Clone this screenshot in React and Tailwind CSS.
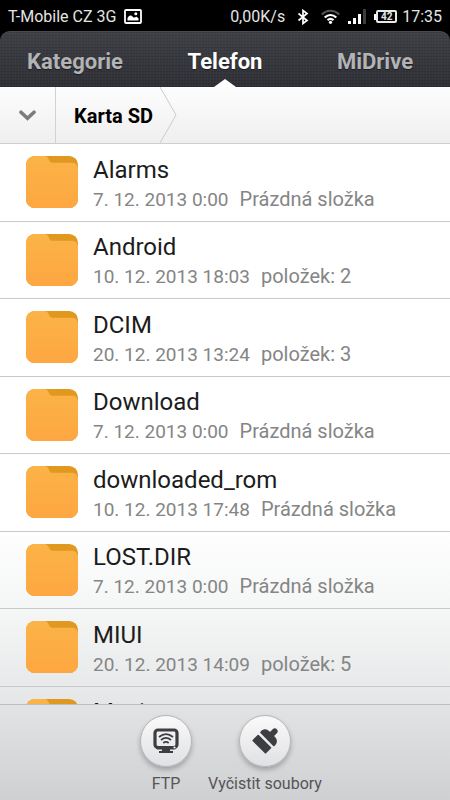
const FOLDERS = [
    { name: 'Alarms', date: '7. 12. 2013 0:00', info: 'Prázdná složka' },
    { name: 'Android', date: '10. 12. 2013 18:03', info: 'položek: 2' },
    { name: 'DCIM', date: '20. 12. 2013 13:24', info: 'položek: 3' },
    { name: 'Download', date: '7. 12. 2013 0:00', info: 'Prázdná složka' },
    { name: 'downloaded_rom', date: '10. 12. 2013 17:48', info: 'Prázdná složka' },
    { name: 'LOST.DIR', date: '7. 12. 2013 0:00', info: 'Prázdná složka' },
    { name: 'MIUI', date: '20. 12. 2013 14:09', info: 'položek: 5' },
    { name: 'Movies', date: '7. 12. 2013 0:00', info: 'Prázdná složka' },
]

const TABS = ['Kategorie', 'Telefon', 'MiDrive']

function StatusBar() {
    return (
        <div className="flex h-[31px] shrink-0 items-center justify-between bg-black px-2 pt-0.5 text-[16px] text-[#e4e4e4]">
            <div className="flex items-center gap-2">
                <span>T-Mobile CZ 3G</span>
                <svg className="h-[15px] w-[18px]" viewBox="0 0 18 15">
                    <rect x="1" y="1" width="16" height="13" rx="1" fill="none" stroke="#fff" strokeWidth="1.8" />
                    <path d="M3.5 11.5V9c1.2-2 2.4-2.8 3.6-2.4 1.3.4 1.6 1.9 2.9 2 .9 0 1.5-1 2.5-.8l2 1.5v2.2z" fill="#fff" />
                    <circle cx="11.8" cy="4.8" r="1.5" fill="#fff" />
                </svg>
            </div>
            <div className="flex items-center">
                <span>0,00K/s</span>
                <svg className="ml-3 h-4 w-3" viewBox="0 0 12 16" fill="none" stroke="#fff" strokeWidth="1.7">
                    <path d="M1.5 4.5l8.5 7L6 14.5v-13L10 4.5l-8.5 7" />
                </svg>
                <svg className="ml-3 h-[15px] w-[19px]" viewBox="0 0 19 15" fill="none" strokeWidth="2.2">
                    <path d="M.8 5.500c5-5 12.400-5 17.400 0" stroke="#555" />
                    <path d="M3.7 8.500c3.500-3.300 8.100-3.300 11.600 0" stroke="#fff" />
                    <path d="M6.5 11.200c2-1.700 4-1.700 6 0" stroke="#fff" />
                    <circle cx="9.5" cy="13.3" r="1.6" fill="#fff" />
                </svg>
                <svg className="ml-2 h-[15px] w-[18px]" viewBox="0 0 18 15" fill="#fff">
                    <rect x="0" y="12" width="3" height="3" />
                    <rect x="5" y="9" width="3" height="6" />
                    <rect x="10" y="5" width="3" height="10" />
                    <rect x="15" y="0" width="3" height="15" fill="#3c3c3c" />
                </svg>
                <div className="ml-2 flex items-center">
                    <span className="h-[6px] w-[2px] bg-white" />
                    <span className="flex h-[13px] w-[21px] items-center justify-center rounded-[2px] border-2 border-[#e8e8e8] text-[10px] font-bold leading-none">42</span>
                </div>
                <span className="ml-[5px]">17:35</span>
            </div>
        </div>
    )
}

function Tabs() {
    return (
        <div className="shrink-0 bg-black">
            <nav className="grid h-14 grid-cols-3 rounded-t-[10px] border-t border-[#4a4b50] bg-[#33343a] bg-[repeating-linear-gradient(90deg,rgba(255,255,255,0.02)_0_1px,transparent_1px_3px),repeating-linear-gradient(0deg,rgba(0,0,0,0.1)_0_1px,transparent_1px_3px),linear-gradient(#404147,#303137)]">
                {TABS.map((tab) => {
                    const active = tab === 'Telefon'
                    return (
                        <button
                            key={tab}
                            type="button"
                            className={`relative pt-1 text-[22px] font-bold [text-shadow:0_1px_1px_rgba(0,0,0,0.5)] ${active ? 'text-white' : 'text-[#b3b3b6]'}`}
                        >
                            {tab}
                            {active && (
                                <svg className="absolute bottom-0 left-1/2 h-2 w-6 -translate-x-1/2" viewBox="0 0 24 8">
                                    <path d="M1 8L12 0l11 8z" fill="#fff" />
                                </svg>
                            )}
                        </button>
                    )
                })}
            </nav>
        </div>
    )
}

function Breadcrumb() {
    return (
        <div className="flex h-[57px] shrink-0 items-stretch border-b border-[#cfcfcf] bg-gradient-to-b from-[#fdfdfd] to-[#efefef]">
            <button type="button" aria-label="Rozbalit" className="flex w-14 items-center justify-center border-r border-[#d2d2d2]">
                <svg className="h-[11px] w-[17px]" viewBox="0 0 17 11" fill="none" stroke="#7c7c7c" strokeWidth="3.6">
                    <path d="M2 2.2l6.500 6 6.500-6" strokeLinecap="round" />
                </svg>
            </button>
            <a href="#sd" className="flex items-center pl-[18px] pr-[7px] pt-0.5 text-[20px] font-bold text-black">Karta SD</a>
            <svg className="h-14 w-[18px]" viewBox="0 0 18 56" fill="none" stroke="#cbcbcb">
                <path d="M0 0l16 28L0 56" />
            </svg>
        </div>
    )
}

function FolderIcon() {
    return (
        <svg className="h-[52px] w-[52px] shrink-0" viewBox="0 0 53 53">
            <defs>
                <linearGradient id="folder" x1="0" y1="0" x2="0" y2="1">
                    <stop offset="0" stopColor="#fbb347" />
                    <stop offset="1" stopColor="#fea742" />
                </linearGradient>
            </defs>
            <rect width="53" height="53" rx="9" fill="#e0981e" />
            <path d="M9 0h10c2 0 3 1 4 3l1 2c1 1.500 2 2 4 2h18c4 0 7 2 7 6v31a9 9 0 0 1-9 9H9a9 9 0 0 1-9-9V9a9 9 0 0 1 9-9z" fill="url(#folder)" />
        </svg>
    )
}

function FolderRow({ name, date, info }) {
    return (
        <li className="h-[77px] border-b border-[#c8c9ca] odd:h-[78px]">
            <button type="button" className="flex h-full w-full items-center gap-[15px] pb-px pl-[26px] text-left">
                <FolderIcon />
                <span className="flex flex-col pt-1">
                    <span className="text-[24px] leading-[30px] text-[#1c1c1c]">{name}</span>
                    <span className="flex items-baseline gap-[11px] text-[19px] leading-[28px] text-[#858585]">
                        <span>{date}</span>
                        <span className="text-[20px]">{info}</span>
                    </span>
                </span>
            </button>
        </li>
    )
}

function ToolButton({ label, children }) {
    return (
        <button type="button" className="flex flex-col items-center gap-[5px] text-[16px] leading-[24px] text-[#545557]">
            <span className="flex h-[52px] w-[52px] items-center justify-center rounded-full border border-[#b4b5b8] bg-gradient-to-b from-[#fafafa] to-[#e0e1e4] shadow-[0_3px_5px_rgba(0,0,0,0.25)]">
                {children}
            </span>
            {label}
        </button>
    )
}

export default function App() {
    return (
        <div className="flex h-screen flex-col overflow-hidden bg-white font-[Roboto,sans-serif]">
            <StatusBar />
            <Tabs />
            <Breadcrumb />
            <ul className="min-h-0 flex-1 overflow-y-auto bg-[linear-gradient(#fff_68%,#f4f5f5_84%,#e5e6e7)] [scrollbar-width:none]">
                {FOLDERS.map((folder) => (
                    <FolderRow key={folder.name} {...folder} />
                ))}
            </ul>
            <footer className="flex h-24 shrink-0 items-start justify-center gap-4 border-t border-[#bcbdbf] bg-gradient-to-b from-[#e2e3e4] to-[#cfd0d2] pl-3 pt-[10px]">
                <ToolButton label="FTP">
                    <svg className="h-[26px] w-[26px]" viewBox="0 0 26 26" fill="none" stroke="#3d3e42">
                        <rect x="2" y="2" width="22" height="17.500" rx="3" strokeWidth="3.2" />
                        <path d="M2 18h22l-2 3.500h-5V23h3v2H6v-2h3v-1.500H4z" fill="#3d3e42" stroke="none" />
                        <path d="M6 9c4.500-3.800 9.500-3.800 14 0M8 12c3.200-2.800 6.800-2.800 10 0M10.300 15c1.800-1.500 3.600-1.500 5.400 0" strokeWidth="1.7" />
                        <circle cx="21.5" cy="19.5" r="1.1" fill="#f0f0f0" stroke="none" />
                    </svg>
                </ToolButton>
                <ToolButton label="Vyčistit soubory">
                    <svg className="h-[26px] w-[26px]" viewBox="0 0 26 26" fill="#3d3e42" stroke="#3d3e42" strokeWidth="1.6" strokeLinejoin="round">
                        <path d="M6.200 7.500L1.200 12.500l12.300 12.300L18.500 19.800z" />
                        <path d="M9 4.500c1.500-2.700 5-3.500 7.500-1l1.500 1.500 3.300-3.300c2.200-1.700 4.700.8 3 3L21 8l1.500 1.500c2.500 2.500 2 6-.7 8z" />
                    </svg>
                </ToolButton>
            </footer>
        </div>
    )
}
